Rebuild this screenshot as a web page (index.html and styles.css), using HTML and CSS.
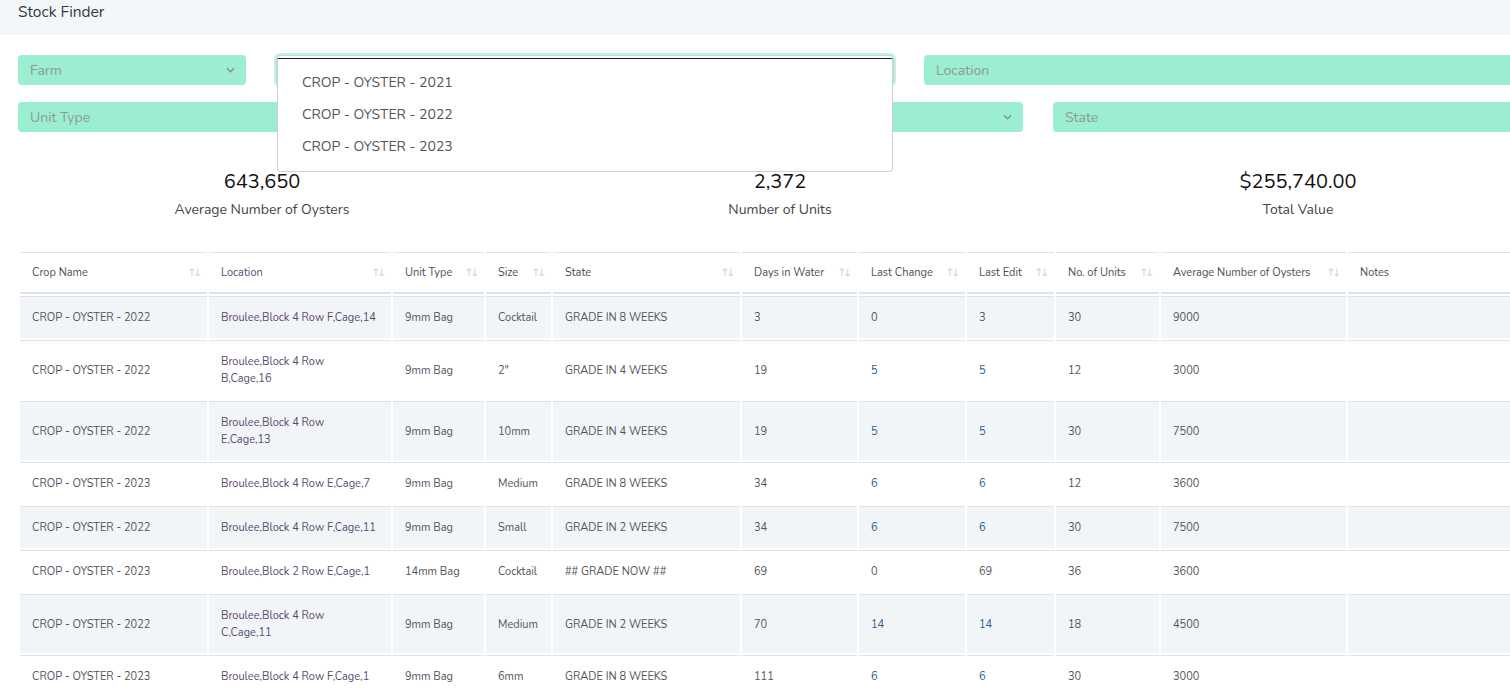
FILE: index.html
```html
<!DOCTYPE html>
<html lang="en">
<head>
<meta charset="utf-8">
<title>Stock Finder</title>
<link rel="stylesheet" href="styles.css">
</head>
<body>
<header class="topbar"><span class="title">Stock Finder</span></header>
<main class="page">
  <section class="filters">
    <div class="filter-row row-a">
      <div class="field select"><span class="ph">Farm</span><svg class="chev" viewBox="0 0 10 6" width="9" height="6"><path d="M1 1l4 4 4-4" fill="none" stroke="#8a8f8c" stroke-width="1.6"/></svg></div>
      <div class="field focused"></div>
      <div class="field"><span class="ph">Location</span></div>
    </div>
    <div class="filter-row row-b">
      <div class="field"><span class="ph">Unit Type</span></div>
      <div class="field select"><span class="ph"></span><svg class="chev" viewBox="0 0 10 6" width="9" height="6"><path d="M1 1l4 4 4-4" fill="none" stroke="#8a8f8c" stroke-width="1.6"/></svg></div>
      <div class="field"><span class="ph">State</span></div>
    </div>
    <ul class="dropdown">
      <li>CROP - OYSTER - 2021</li>
      <li>CROP - OYSTER - 2022</li>
      <li>CROP - OYSTER - 2023</li>
    </ul>
  </section>

  <section class="stats">
    <div class="stat"><div class="num">643,650</div><div class="lbl">Average Number of Oysters</div></div>
    <div class="stat"><div class="num">2,372</div><div class="lbl">Number of Units</div></div>
    <div class="stat"><div class="num">$255,740.00</div><div class="lbl">Total Value</div></div>
  </section>

  <table class="grid">
    <colgroup>
      <col class="c-crop"><col class="c-loc"><col class="c-unit"><col class="c-size"><col class="c-state"><col class="c-days"><col class="c-lchg"><col class="c-ledit"><col class="c-units"><col class="c-avg"><col class="c-notes">
    </colgroup>
    <thead>
      <tr>
        <th><div class="th">Crop Name<span class="sort">↑↓</span></div></th>
        <th class="loc"><div class="th">Location<span class="sort">↑↓</span></div></th>
        <th><div class="th">Unit Type<span class="sort">↑↓</span></div></th>
        <th><div class="th">Size<span class="sort">↑↓</span></div></th>
        <th><div class="th">State<span class="sort">↑↓</span></div></th>
        <th><div class="th">Days in Water<span class="sort">↑↓</span></div></th>
        <th><div class="th">Last Change<span class="sort">↑↓</span></div></th>
        <th><div class="th">Last Edit<span class="sort">↑↓</span></div></th>
        <th><div class="th">No. of Units<span class="sort">↑↓</span></div></th>
        <th><div class="th">Average Number of Oysters<span class="sort">↑↓</span></div></th>
        <th><div class="th">Notes</div></th>
      </tr>
    </thead>
    <tbody>
      <tr>
        <td>CROP - OYSTER - 2022</td><td class="loc">Broulee,Block 4 Row F,Cage,14</td><td>9mm Bag</td><td>Cocktail</td><td>GRADE IN 8 WEEKS</td><td>3</td><td>0</td><td>3</td><td>30</td><td>9000</td><td></td>
      </tr>
      <tr>
        <td>CROP - OYSTER - 2022</td><td class="loc">Broulee,Block 4 Row<br>B,Cage,16</td><td>9mm Bag</td><td>2"</td><td>GRADE IN 4 WEEKS</td><td>19</td><td class="lnk">5</td><td class="lnk">5</td><td>12</td><td>3000</td><td></td>
      </tr>
      <tr>
        <td>CROP - OYSTER - 2022</td><td class="loc">Broulee,Block 4 Row<br>E,Cage,13</td><td>9mm Bag</td><td>10mm</td><td>GRADE IN 4 WEEKS</td><td>19</td><td class="lnk">5</td><td class="lnk">5</td><td>30</td><td>7500</td><td></td>
      </tr>
      <tr>
        <td>CROP - OYSTER - 2023</td><td class="loc">Broulee,Block 4 Row E,Cage,7</td><td>9mm Bag</td><td>Medium</td><td>GRADE IN 8 WEEKS</td><td>34</td><td class="lnk">6</td><td class="lnk">6</td><td>12</td><td>3600</td><td></td>
      </tr>
      <tr>
        <td>CROP - OYSTER - 2022</td><td class="loc">Broulee,Block 4 Row F,Cage,11</td><td>9mm Bag</td><td>Small</td><td>GRADE IN 2 WEEKS</td><td>34</td><td class="lnk">6</td><td class="lnk">6</td><td>30</td><td>7500</td><td></td>
      </tr>
      <tr>
        <td>CROP - OYSTER - 2023</td><td class="loc">Broulee,Block 2 Row E,Cage,1</td><td>14mm Bag</td><td>Cocktail</td><td>## GRADE NOW ##</td><td>69</td><td>0</td><td>69</td><td>36</td><td>3600</td><td></td>
      </tr>
      <tr>
        <td>CROP - OYSTER - 2022</td><td class="loc">Broulee,Block 4 Row<br>C,Cage,11</td><td>9mm Bag</td><td>Medium</td><td>GRADE IN 2 WEEKS</td><td>70</td><td class="lnk">14</td><td class="lnk">14</td><td>18</td><td>4500</td><td></td>
      </tr>
      <tr>
        <td>CROP - OYSTER - 2023</td><td class="loc">Broulee,Block 4 Row F,Cage,1</td><td>9mm Bag</td><td>6mm</td><td>GRADE IN 8 WEEKS</td><td>111</td><td class="lnk">6</td><td class="lnk">6</td><td>30</td><td>3000</td><td></td>
      </tr>
    </tbody>
  </table>
</main>
</body>
</html>
```

FILE: styles.css
```css
html, body {
  margin: 0;
  padding: 0;
  overflow: hidden;
  background: #ffffff;
}
body {
  font-family: "Nunito", Lato, "Open Sans", sans-serif;
  color: #495057;
  width: 1560px;
}

.topbar {
  height: 35px;
  background: #f4f7fa;
  padding: 0 18px;
  box-sizing: border-box;
  display: flex;
  align-items: flex-start;
}
.title {
  font-size: 15.5px;
  line-height: 24px;
  color: #343a40;
}

.page {
  width: 1524px;
  padding: 20px 18px 0 18px;
}

.filters {
  position: relative;
  display: flex;
  flex-direction: column;
  gap: 17px;
}
.filter-row {
  display: grid;
  column-gap: 30px;
}
.row-a { grid-template-columns: 228px 618px 1fr; }
.row-b { grid-template-columns: 489px 486px 1fr; column-gap: 30px; }

.field {
  height: 30px;
  background: #9beecf;
  border-radius: 4px;
  display: flex;
  align-items: center;
  justify-content: space-between;
  padding: 0 12px;
  box-sizing: border-box;
}
.ph {
  font-size: 14px;
  color: #8f9a95;
}
.chev { margin-right: -1px; }
.field.focused {
  background: #ffffff;
  border: 1px solid #a6e6cb;
  box-shadow: 0 0 0 2px #c6efdd;
}

.dropdown {
  position: absolute;
  left: 259px;
  top: 3px;
  width: 616px;
  height: 114px;
  box-sizing: border-box;
  margin: 0;
  padding: 8px 0 9px 0;
  list-style: none;
  background: #ffffff;
  border: 1px solid #cfcfcf;
  border-top: 1px solid #222;
  border-radius: 0 0 4px 4px;
  z-index: 5;
}
.dropdown li {
  height: 32px;
  line-height: 32px;
  padding-left: 24px;
  font-size: 14px;
  color: #555;
}

.stats {
  display: grid;
  grid-template-columns: repeat(3, 1fr);
  margin: 38px -15px 0 -15px;
  text-align: center;
}
.num {
  font-size: 20px;
  line-height: 24px;
  color: #111;
}
.lbl {
  margin-top: 6px;
  font-size: 14px;
  line-height: 20px;
  color: #444;
}

.grid {
  margin-top: 30px;
  margin-left: 0;
  table-layout: fixed;
  border-collapse: separate;
  border-spacing: 2px;
  width: 1524px;
  font-size: 11px;
}
.c-crop { width: 187px; }
.c-loc { width: 182px; }
.c-unit { width: 91px; }
.c-size { width: 65px; }
.c-state { width: 187px; }
.c-days { width: 115px; }
.c-lchg { width: 106px; }
.c-ledit { width: 87px; }
.c-units { width: 103px; }
.c-avg { width: 185px; }
.c-notes { width: auto; }

.grid th {
  font-weight: normal;
  text-align: left;
  color: #495057;
  border-top: 1px solid #dee2e6;
  border-bottom: 2px solid #dee2e6;
  padding: 11px 12px;
  line-height: 17px;
}
.th {
  display: flex;
  justify-content: space-between;
  align-items: center;
  white-space: nowrap;
}
.sort {
  font-size: 9px;
  color: #c4c9ce;
  letter-spacing: -1px;
  margin-right: -5px;
}
.grid td {
  border-top: 1px solid #dee2e6;
  padding: 12px 12px;
  line-height: 17px;
  white-space: nowrap;
  color: #50555a;
  vertical-align: middle;
}
.grid tbody tr:nth-child(odd) td { background: #f2f5f8; }
.grid .loc { color: #5a4a6e; }
.grid td.lnk { color: #2f5d8a; }
```
